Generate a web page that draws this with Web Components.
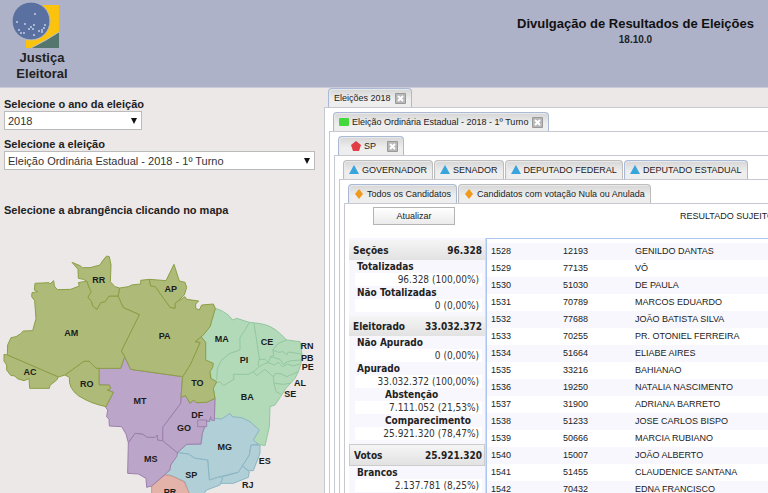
<!DOCTYPE html>
<html lang="pt-BR">
<head>
<meta charset="utf-8">
<title>Divulgação de Resultados de Eleições</title>
<style>
html,body{margin:0;height:100%}
body{font-family:"Liberation Sans",Arial,sans-serif;color:#222;background:#ece8e7;overflow:hidden}
</style>
</head>
<body>
<results-app></results-app>

<template id="t-app">
<style>
:host{display:flex;flex-direction:column;height:100vh;overflow:hidden}
main{flex:1;min-height:0;display:grid;grid-template-columns:324px minmax(0,1fr)}
.side{display:flex;flex-direction:column;gap:8px;padding:10px 9px 0 4px}
.side h2{margin:26px 0 0;font-size:11px;line-height:13px;color:#222}
.year{width:138px}
region-map{margin:5px -9px 0 -4px}
.bar{display:flex;align-items:center;justify-content:space-between;height:18px;padding:3px 0 13px 28px;overflow:hidden}
.bar button{width:82px;height:18px;padding:0;font:9px "Liberation Sans",Arial,sans-serif;color:#222;border:1px solid #b4b4b4;background:linear-gradient(#fff,#ebebeb)}
.bar span{flex:0 0 88px;min-width:0;font-size:9px;white-space:nowrap;color:#222}
.data{display:grid;grid-template-columns:137px minmax(0,1fr);padding-left:4px}
</style>
<app-header></app-header>
<main>
 <section class="side">
  <labeled-select class="year" label="Selecione o ano da eleição" value="2018"></labeled-select>
  <labeled-select label="Selecione a eleição" value="Eleição Ordinária Estadual - 2018 - 1º Turno"></labeled-select>
  <h2>Selecione a abrangência clicando no mapa</h2>
  <region-map></region-map>
 </section>
 <tab-panel>
  <tab-item slot="tabs" active closable>Eleições 2018</tab-item>
  <tab-panel>
   <tab-item slot="tabs" active closable icon="square">Eleição Ordinária Estadual - 2018 - 1º Turno</tab-item>
   <tab-panel>
    <tab-item slot="tabs" active closable wide icon="pentagon">SP</tab-item>
    <tab-panel>
     <tab-item slot="tabs" icon="triangle">GOVERNADOR</tab-item>
     <tab-item slot="tabs" icon="triangle">SENADOR</tab-item>
     <tab-item slot="tabs" icon="triangle">DEPUTADO FEDERAL</tab-item>
     <tab-item slot="tabs" icon="triangle" active>DEPUTADO ESTADUAL</tab-item>
     <tab-panel>
      <tab-item slot="tabs" icon="diamond" active>Todos os Candidatos</tab-item>
      <tab-item slot="tabs" icon="diamond">Candidatos com votação Nula ou Anulada</tab-item>
      <div class="bar"><button type="button">Atualizar</button><span>RESULTADO SUJEITO</span></div>
      <div class="data"><vote-summary></vote-summary><candidate-table></candidate-table></div>
     </tab-panel>
    </tab-panel>
   </tab-panel>
  </tab-panel>
 </tab-panel>
</main>
</template>

<template id="t-header">
<style>
:host{display:flex;justify-content:space-between;height:88px;box-sizing:border-box;background:#adb2c9;border-bottom:1px solid #c9cbd8}
.brand{width:84px;text-align:center;font-weight:bold;font-size:13px;line-height:16px;color:#222}
svg{display:block;width:50px;height:50px;margin-left:12px}
.title{text-align:center;padding:16px 14px 0 0;color:#111}
h1{margin:0;font-size:13px;line-height:16px}
p{margin:2px 0 0;font-size:10px;line-height:12px;font-weight:bold;color:#222}
</style>
<div class="brand">
 <svg viewBox="0 0 50 50" aria-hidden="true">
  <path fill="#fbc30d" d="M14 5h33v27L20 48h-6z"/>
  <path fill="#54766f" d="M47 32v16H19Q35 40 47 32z"/>
  <path fill="none" stroke="#c6c8b8" stroke-width="1" d="M47 32Q35 40 19 48"/>
  <circle cx="19" cy="21" r="19" fill="#5970a0" stroke="#b5bbc9"/>
  <g fill="#c5cfe4"><circle cx="23" cy="14" r="1"/><circle cx="5" cy="22" r="1"/><circle cx="13" cy="24" r="1"/><circle cx="7" cy="30" r="1"/><circle cx="9" cy="33" r="1"/><circle cx="12" cy="33" r="1"/><circle cx="19" cy="27" r="1"/><circle cx="22" cy="25" r="1"/><circle cx="21" cy="29" r="1"/><circle cx="17" cy="29" r="1"/><circle cx="22" cy="35" r="1"/><circle cx="27" cy="31" r="1"/><circle cx="30" cy="30" r="1"/><circle cx="32" cy="28" r="1"/><circle cx="33" cy="25" r="1"/><circle cx="30" cy="32" r="1"/></g>
 </svg>
 Justiça<br>Eleitoral
</div>
<div class="title"><h1>Divulgação de Resultados de Eleições</h1><p>18.10.0</p></div>
</template>

<template id="t-select">
<style>
:host{display:block}
label{display:block;font-size:11px;line-height:13px;font-weight:bold;color:#222;white-space:nowrap}
.box{display:grid;align-items:center}
.box>*{grid-area:1/1}
select{appearance:none;width:100%;height:19px;margin:0;padding:0 16px 0 3px;border:1px solid #bbb;border-radius:0;background:#fff;font:11px "Liberation Sans",Arial,sans-serif;color:#333}
svg{justify-self:end;width:6px;height:6px;margin-right:5px;pointer-events:none}
</style>
<label for="s"></label>
<div class="box"><select id="s"><option></option></select><svg viewBox="0 0 6 6" aria-hidden="true"><path d="M0 0h6L3 6z" fill="#111"/></svg></div>
</template>

<template id="t-panel">
<style>
:host{display:block;min-width:0}
.tabs{display:flex;gap:1px;padding-left:4px}
.body{background:#fff;border:solid #c6c9d0;border-width:1px 0 0 1px;padding:4px 0 0 4px;height:100%;box-sizing:border-box}
.body.leaf{padding:0}
</style>
<div class="tabs"><slot name="tabs"></slot></div>
<div class="body"><slot></slot></div>
</template>

<template id="t-tab">
<style>
:host{display:flex;align-items:center;height:19px;box-sizing:border-box;padding:0 5px;border:1px solid #bdbdbd;border-bottom:0;border-radius:4px 4px 0 0;background:linear-gradient(#d6d6d6,#eee 60%,#eee);box-shadow:inset 1px 1px #e9e9e9}
:host([active]){border-color:#a9b9d6}
:host([wide]){padding-left:12px}
:host([wide]) .close{margin-left:11px}
button{display:flex;align-items:center;gap:3px;padding:0;border:0;background:none;font:9px/12px "Liberation Sans",Arial,sans-serif;color:#222;white-space:nowrap}
svg{display:block}
.icon{width:10px;height:10px}
.icon:empty{display:none}
.close{width:11px;height:11px;margin-left:4px}
</style>
<button type="button" class="name"><svg class="icon" viewBox="0 0 10 10" aria-hidden="true"></svg><slot></slot></button>
</template>

<template id="t-map">
<style>
:host{display:block}
svg{display:block;width:100%}
path,rect{stroke-width:3;stroke-linejoin:round}
.n{fill:#aebb78;stroke:#8c9e45}
.ne{fill:#b2dab8;stroke:#92c79f}
.l{fill:none;stroke:#92c79f}
.co{fill:#bba5c8;stroke:#9c80ac}
.se{fill:#b0cfd7;stroke:#8ab6c3}
.s{fill:#e3b3aa;stroke:#cf958c}
text{font:bold 27px "Liberation Sans",Arial,sans-serif;fill:#1b1b1b;text-anchor:middle}
</style>
<svg viewBox="0 0 972 789" role="img" aria-label="Mapa do Brasil">
<path class="ne" d="M646,235 665,242 685,255 698,270 710,265 748,277 775,280Q815,284 845,315L860,330 900,335 906,372 903,400 895,425 885,445 858,475 835,510 825,525 810,530 808,590 795,647 778,643 700,600 643,570 645,505 640,475 630,425 617,390 617,337 603,320 630,290Z"/>
<path class="l" d="M748,277 735,300 720,322V360L690,370 665,390 652,415 650,450M762,280 778,385 774,405 778,410 760,425 745,433H700L702,448 670,467 660,455 640,462M860,330 835,340 818,360 822,375 812,380 805,398 795,388H778M818,360 835,367 850,365 860,375 865,366 905,372M812,380 840,388 850,403 862,395 875,392 903,390M778,410 792,402 805,398 822,405 835,397 848,410 862,402 880,408 900,402M760,425 770,437 795,418 820,440 827,430 845,432 860,440 895,425M820,440 822,460 850,463 870,460M822,460 828,485 842,492"/>
<path class="se" d="M532,668 560,643 603,642 607,610 620,573 645,565 665,567 690,550 697,560 725,563 750,575 778,600 760,630 775,643 753,645 748,675 730,705 715,727 660,740 628,750 623,690 585,685 565,672Z"/>
<path class="se" d="M753,645 780,645V670L760,722 745,722 727,708 748,675Z"/>
<path class="se" d="M727,708 748,725 745,742 700,760H660L668,740 715,727Z"/>
<path class="se" d="M532,668 565,672 585,685 623,690 628,750 660,740 668,745 660,765 620,780 605,800H570L555,755 510,735H490L512,705Z"/>
<path class="s" d="M455,768 495,735 515,738 552,755 572,800H455Z"/>
<path class="co" d="M385,638 405,610 428,612 442,622 465,622 472,615 473,630 488,632 533,668 530,680 512,705 510,720 455,768 440,772 438,745 415,732 383,730Z"/>
<path class="co" d="M543,502 557,497 570,520 580,510 590,518 620,517 645,505 643,572 633,570 632,560 628,575 620,573 607,610 603,642 560,643 532,668 488,632V592L542,520Z"/>
<rect class="co" x="593" y="570" width="27" height="20"/>
<path class="co" d="M296,415 362,415 374,380 392,418 548,440 543,502 542,520 488,592V632L473,630 472,615 465,622H442L428,612 405,610 385,638 378,612 365,590 328,588 327,568 320,560 323,540 317,532 340,487 322,480 332,475 328,465H297Z"/>
<path class="n" d="M603,320 617,337V390L640,400 638,412 630,425 632,445 650,455 640,475 645,505 620,517 590,518 580,510 570,520 557,497 543,502 548,440 572,402 600,338 585,335Z"/>
<path class="n" d="M359,174 385,170 395,165 422,162V151L448,148 452,168 466,170 510,232 525,235V220L555,200 560,208 596,213 587,222V235L598,240 605,225 640,222 646,235 630,290 610,315 585,335 600,338 572,402 548,440 392,418 374,380 364,363 418,254 370,233 354,198Z"/>
<path class="n" d="M448,148 498,152 522,103 538,153 555,157 560,172 553,195 525,220V235L510,232 466,170 452,168Z"/>
<path class="n" d="M105,160 147,158 150,162 161,152 163,168 172,179 212,178 238,168 235,158 250,155 262,155 266,170 274,185 264,202 275,215 278,228 291,238 302,218 315,215 327,198 354,198 370,233 418,254 364,363 374,380 362,415H288L268,394H252L195,435 175,441 22,375 23,345 33,323 48,320 62,311 70,303 98,302 108,266 104,212 95,200 96,188 113,185 103,180Z"/>
<path class="n" d="M216,97 240,107 247,113 270,113 300,105 308,92 320,78 328,80 333,105 331,155 345,170 359,174 354,198H327L315,215 302,218 291,238 278,228 275,215 264,202 274,185 266,170 262,155 250,148 235,145 234,118Z"/>
<path class="n" d="M12,373 22,375 175,441 170,450 150,466 148,475H89L87,446 72,452 52,446 45,438 32,436 20,420V405L12,393Z"/>
<path class="n" d="M195,435 252,394H268L288,415H297V465H328L332,475 322,480 340,487 318,530Q270,520 235,497 205,475 208,442Z"/>
<g id="labels"></g>
</svg>
</template>

<template id="t-summary">
<style>
:host{display:block;padding-top:2px;font:10px/13px "DejaVu Sans Condensed","DejaVu Sans",sans-serif;color:#333;background:#f7f7fd;border-right:1px solid #d8dce6}
dl{margin:0}
.group{margin-bottom:4px}
.head{display:flex;justify-content:space-between;align-items:center;height:20px;padding:0 3px 0 4px;background:linear-gradient(#f5f5f5,#e2e2e2);font-weight:bold;color:#222}
.framed .head{border:1px solid #ccc;padding:0 2px 0 4px}
.row dt{padding-left:8px;font-weight:bold;color:#222}
.row dd{margin:0 3px 0 6px;padding-right:3px;background:#fff;text-align:right}
.row.sub dt{padding-left:36px}
dt,dd{margin:0;white-space:nowrap}
</style>
</template>

<template id="t-table">
<style>
:host{display:block;border:solid #abc6f2;border-width:1px 0 0 1px;padding-top:4px;background:#fff;overflow:hidden}
table{width:100%;border-collapse:collapse;table-layout:fixed;font-size:9px;color:#222}
td{height:17px;padding:0 0 0 4px;line-height:17px;white-space:nowrap}
td:nth-child(-n+2){width:68px}
tr:nth-child(odd){background:#f7f7fd}
</style>
<table><tbody></tbody></table>
</template>

<script>
class Base extends HTMLElement {
  constructor(id) {
    super();
    this.attachShadow({ mode: 'open' }).append(document.getElementById(id).content.cloneNode(true));
  }
  $(q) { return this.shadowRoot.querySelector(q); }
}

customElements.define('app-header', class extends Base { constructor() { super('t-header'); } });

customElements.define('labeled-select', class extends Base {
  constructor() { super('t-select'); }
  connectedCallback() {
    this.$('label').textContent = this.getAttribute('label');
    this.$('option').textContent = this.getAttribute('value');
  }
});

customElements.define('tab-panel', class extends Base {
  constructor() { super('t-panel'); }
  connectedCallback() {
    this.$('.body').classList.toggle('leaf', !this.querySelector('tab-panel'));
  }
});

const ICONS = {
  square: '<rect y="1" width="10" height="8" rx="1" fill="#43d83c"/>',
  pentagon: '<path d="M5 0l5 4-2 6H2L0 4z" fill="#e23c44"/>',
  triangle: '<path d="M5 0l5 9H0z" fill="#38a5dd"/>',
  diamond: '<path d="M5 0l4 5-4 5-4-5z" fill="#f09a1c"/>'
};
customElements.define('tab-item', class extends Base {
  constructor() { super('t-tab'); }
  connectedCallback() {
    this.$('.icon').innerHTML = ICONS[this.getAttribute('icon')] || '';
    if (this.hasAttribute('closable') && !this.$('.close')) {
      const b = document.createElement('button');
      b.className = 'close';
      b.type = 'button';
      b.setAttribute('aria-label', 'Fechar');
      b.innerHTML = '<svg width="11" height="11" viewBox="0 0 11 11"><rect width="11" height="11" rx="1" fill="#999"/><rect x="1" y="1" width="9" height="9" fill="#b8b8b8"/><path d="M3 3l5 5M8 3l-5 5" stroke="#fff" stroke-width="2"/></svg>';
      this.shadowRoot.append(b);
    }
  }
});

const LABELS = [['RR',296,158],['AM',214,319],['AC',90,436],['RO',260,472],['AP',512,185],['PA',494,326],['TO',592,467],
  ['MA',665,335],['PI',732,398],['CE',801,345],['RN',921,357],['PB',922,394],['PE',923,420],['AL',900,467],['SE',871,501],
  ['BA',742,509],['MT',420,523],['DF',592,564],['GO',552,604],['MS',452,696],['MG',674,660],['SP',574,743],['ES',794,701],
  ['RJ',743,775],['PR',510,796]];
customElements.define('region-map', class extends Base {
  constructor() {
    super('t-map');
    this.$('#labels').innerHTML = LABELS.map(([t, x, y]) => `<text x="${x}" y="${y}">${t}</text>`).join('');
  }
});

const SUMMARY = [
  ['Seções', '96.328', [['Totalizadas', '96.328 (100,00%)'], ['Não Totalizadas', '0 (0,00%)']]],
  ['Eleitorado', '33.032.372', [['Não Apurado', '0 (0,00%)'], ['Apurado', '33.032.372 (100,00%)'],
    ['Abstenção', '7.111.052 (21,53%)', 1], ['Comparecimento', '25.921.320 (78,47%)', 1]]],
  ['Votos', '25.921.320', [['Brancos', '2.137.781 (8,25%)']], 1]
];
customElements.define('vote-summary', class extends Base {
  constructor() {
    super('t-summary');
    this.shadowRoot.append(...SUMMARY.map(([name, total, rows, framed]) => {
      const g = document.createElement('div');
      g.className = framed ? 'group framed' : 'group';
      g.innerHTML = `<div class="head"><span>${name}</span><span>${total}</span></div>` +
        rows.map(([k, v, sub]) => `<dl class="row${sub ? ' sub' : ''}"><dt>${k}</dt><dd>${v}</dd></dl>`).join('');
      return g;
    }));
  }
});

const ROWS = [[1528,12193,'GENILDO DANTAS'],[1529,77135,'VÔ'],[1530,51030,'DE PAULA'],[1531,70789,'MARCOS EDUARDO'],
  [1532,77688,'JOÃO BATISTA SILVA'],[1533,70255,'PR. OTONIEL FERREIRA'],[1534,51664,'ELIABE AIRES'],[1535,33216,'BAHIANAO'],
  [1536,19250,'NATALIA NASCIMENTO'],[1537,31900,'ADRIANA BARRETO'],[1538,51233,'JOSE CARLOS BISPO'],[1539,50666,'MARCIA RUBIANO'],
  [1540,15007,'JOÃO ALBERTO'],[1541,51455,'CLAUDENICE SANTANA'],[1542,70432,'EDNA FRANCISCO']];
customElements.define('candidate-table', class extends Base {
  constructor() {
    super('t-table');
    this.$('tbody').innerHTML = ROWS.map(r => `<tr>${r.map(c => `<td>${c}</td>`).join('')}</tr>`).join('');
  }
});

customElements.define('results-app', class extends Base { constructor() { super('t-app'); } });
</script>
</body>
</html>
